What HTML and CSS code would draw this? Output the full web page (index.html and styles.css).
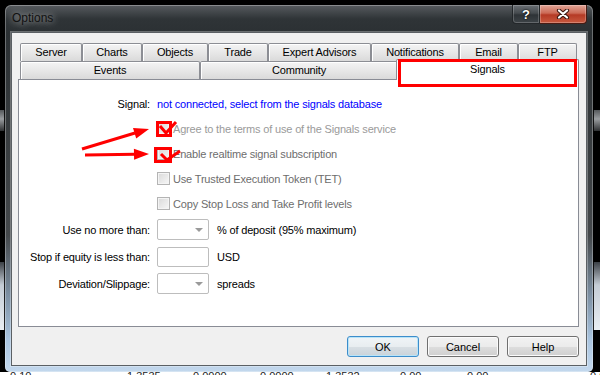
FILE: index.html
```html
<!DOCTYPE html>
<html lang="en">
<head>
    <meta charset="UTF-8">
    <meta name="viewport" content="width=device-width, initial-scale=1.0">
    <title>Options</title>
    <link rel="stylesheet" href="styles.css">
</head>
<body>

<div class="desktop">
    <div class="window">
        <div class="titlebar">
            <span class="title">Options</span>
            <div class="caption">
                <span class="cap help">?</span>
                <span class="cap close">
                    <svg width="14" height="10" viewBox="0 0 14 10">
                        <path d="M3 1.5 L11 8.5 M11 1.5 L3 8.5" stroke="#3a1610" stroke-width="4.2" stroke-linecap="round"/>
                        <path d="M3 1.5 L11 8.5 M11 1.5 L3 8.5" stroke="#fff" stroke-width="2.2" stroke-linecap="round"/>
                    </svg>
                </span>
            </div>
        </div>

        <div class="client">
            <div class="tabs">
                <div class="tab-row top-row">
                    <div class="tab">Server</div>
                    <div class="tab">Charts</div>
                    <div class="tab">Objects</div>
                    <div class="tab">Trade</div>
                    <div class="tab">Expert Advisors</div>
                    <div class="tab">Notifications</div>
                    <div class="tab">Email</div>
                    <div class="tab">FTP</div>
                </div>
                <div class="tab-row bottom-row">
                    <div class="tab">Events</div>
                    <div class="tab">Community</div>
                    <div class="tab active">Signals</div>
                </div>
            </div>

            <div class="panel">
                <div class="form">
                    <div class="label">Signal:</div>
                    <div class="field"><span class="link">not connected, select from the signals database</span></div>

                    <div class="label"></div>
                    <div class="field"><span class="check"></span><span class="faint">Agree to the terms of use of the Signals service</span></div>

                    <div class="label"></div>
                    <div class="field"><span class="check"></span><span class="muted">Enable realtime signal subscription</span></div>

                    <div class="label"></div>
                    <div class="field"><span class="check"></span><span class="muted">Use Trusted Execution Token (TET)</span></div>

                    <div class="label"></div>
                    <div class="field"><span class="check"></span><span class="muted">Copy Stop Loss and Take Profit levels</span></div>

                    <div class="label">Use no more than:</div>
                    <div class="field wide"><span class="combo"></span><span>% of deposit (95% maximum)</span></div>

                    <div class="label">Stop if equity is less than:</div>
                    <div class="field wide"><span class="edit"></span><span>USD</span></div>

                    <div class="label">Deviation/Slippage:</div>
                    <div class="field wide"><span class="combo"></span><span>spreads</span></div>
                </div>
            </div>

            <div class="buttons">
                <button class="btn default">OK</button>
                <button class="btn">Cancel</button>
                <button class="btn">Help</button>
            </div>
        </div>
    </div>
</div>

<div class="ticker">
    <span style="width: 117px">0.10</span>
    <span style="width: 66px">1.3535</span>
    <span style="width: 67px">0.0000</span>
    <span style="width: 66px">0.0000</span>
    <span style="width: 74px">1.3532</span>
    <span style="width: 67px">0.00</span>
    <span style="width: 123px">0.00</span>
    <span>0.00</span>
</div>

<!-- red markup drawn over the screenshot -->
<svg class="marks" width="600" height="375" viewBox="0 0 600 375">
    <g fill="none" stroke="#ff0000" stroke-width="3">
        <rect x="399.5" y="60.5" width="176" height="25"/>
        <rect x="157.5" y="122.5" width="13" height="13"/>
        <rect x="155.5" y="148.5" width="15" height="13"/>
        <polyline points="160,126 166,133 176,122" stroke-linejoin="round"/>
        <polyline points="161,154 167,160 180,151" stroke-linejoin="round"/>
        <line x1="82" y1="149" x2="135" y2="133"/>
        <line x1="85" y1="155" x2="135" y2="154.2"/>
    </g>
    <g fill="#ff0000">
        <polygon points="149,129 136.2,138.6 133,128"/>
        <polygon points="149,154 134.1,159.7 133.9,148.7"/>
    </g>
</svg>

</body>
</html>
```

FILE: styles.css
```css
* { box-sizing: border-box; }
body { margin: 0; width: 600px; height: 375px; overflow: hidden; position: relative; background: #000; font-family: "Liberation Sans", Arial, sans-serif; font-size: 11px; letter-spacing: -0.17px; color: #000; }

/* Terminal showing behind the dialog */
.desktop { height: 372px; padding: 5px 7px 0 5px; background:
    linear-gradient(to bottom, transparent 110px, #55585b 110px, #9a9da0 119px, #2e3032 131px, transparent 131px),
    linear-gradient(to bottom, transparent 262px, #3b4046 262px, #c4ccd5 285px, #e9eef3 330px, transparent 330px),
    #000; }
.ticker { height: 3px; overflow: hidden; background: #fff; display: flex; padding-left: 10px; line-height: 9px; color: #222; letter-spacing: 0; }
.ticker span { flex: none; }

/* Window frame */
.window { width: 588px; height: 367px; padding: 0 6px 6px; display: flex; flex-direction: column; border-radius: 6px 6px 5px 5px;
    background: linear-gradient(to bottom, #575b5f 0, #2f3437 14px, #2b3033 30px, #44484b 230px, #7d90a3 290px, #a9c4df 335px, #c3d8ed 367px);
    box-shadow: 0 0 0 1px rgba(0, 0, 0, 0.85), inset 0 0 0 1px rgba(255, 255, 255, 0.3); }
.titlebar { height: 27px; flex: none; display: flex; justify-content: space-between; align-items: flex-start; padding-left: 1px; }
.title { padding-top: 6px; font-size: 12px; line-height: 15px; letter-spacing: 0; color: #111;
    text-shadow: 0 0 6px rgba(255, 255, 255, 0.6), 0 0 12px rgba(255, 255, 255, 0.35); }
.caption { display: flex; }
.cap { height: 19px; display: flex; align-items: center; justify-content: center; border: 1px solid #23272a; border-top: none; }
.help { width: 28px; border-radius: 0 0 0 4px; color: #fff; font-weight: bold; font-size: 13px; letter-spacing: 0; text-shadow: 0 0 2px #000, 0 0 1px #000;
    background: linear-gradient(#6a6f74, #464b4f 45%, #2e3337 55%, #3d4347);
    box-shadow: inset 0 0 0 1px rgba(255, 255, 255, 0.2); }
.close { width: 47px; border-radius: 0 0 4px 0; border-left: none; border-color: #4a1b13;
    background: linear-gradient(#e2a597, #cc6a56 45%, #b53a25 55%, #c85a40);
    box-shadow: inset 0 0 0 1px rgba(255, 255, 255, 0.25); }

/* Client area */
.client { flex: 1; display: flex; flex-direction: column; padding: 10px 7px 0 6px; background: #f0f0f0; border: 1px solid #5b6064; box-shadow: 0 0 0 1px rgba(255, 255, 255, 0.3); }

/* Tabs */
.tabs { margin: 0 2px; }
.tab-row { display: grid; height: 18px; }
.top-row { grid-template-columns: 62px 60px 66px 60px 103px 88px 59px 59px; }
.bottom-row { grid-template-columns: 180px 198px 179px; }
.tab { border: 1px solid #8c8e94; border-bottom: none; border-radius: 2px 2px 0 0; text-align: center; line-height: 16px;
    background: linear-gradient(#f4f4f4, #e6e6e6 55%, #dadada); box-shadow: inset 1px 1px 0 #fff; }
.tab.active { background: #fff; margin: -2px -2px -1px; position: relative; z-index: 1; line-height: 18px; box-shadow: none; }

.panel { height: 248px; flex: none; border: 1px solid #898c95; background: #fff; padding-top: 11px; }
.form { display: grid; grid-template-columns: 131px 1fr; grid-template-rows: repeat(5, 25px) repeat(3, 27px); column-gap: 7px; }
.label { text-align: right; align-self: center; }
.field { display: flex; align-items: center; gap: 3px; }
.field.wide { gap: 8px; }
.link { color: #0000ff; }
.muted { color: #6d6d6d; }
.faint { color: #9a9a9a; }

.check { width: 13px; height: 13px; flex: none; border: 1px solid #b4b4b4; background: linear-gradient(135deg, #d9d9d9, #f7f7f7); box-shadow: inset 0 0 0 1px #f4f4f4; }
.combo, .edit { width: 52px; height: 21px; flex: none; border: 1px solid #bdbdbd; border-radius: 2px; background: #fff; }
.edit { height: 20px; }
.combo { position: relative; }
.combo::after { content: ""; position: absolute; right: 5px; top: 8px; border: 4px solid transparent; border-top: 4px solid #9a9a9a; border-bottom: none; }

/* Dialog buttons */
.buttons { display: flex; justify-content: flex-end; gap: 8px; margin-top: 9px; }
.btn { width: 72px; height: 21px; padding: 0; font: inherit; color: #000; border: 1px solid #707070; border-radius: 3px;
    background: linear-gradient(#f2f2f2, #ebebeb 50%, #dddddd 51%, #cfcfcf); box-shadow: inset 0 0 0 1px #fbfbfb; }
.btn.default { border-color: #3c8dcb; box-shadow: inset 0 0 0 1px #b9e4f8; background: linear-gradient(#f0f4f7, #e8edf0 50%, #d8dfe4 51%, #cad3d9); }

/* Annotation layer, above the selected tab */
.marks { position: absolute; left: 0; top: 0; z-index: 5; pointer-events: none; }
```
